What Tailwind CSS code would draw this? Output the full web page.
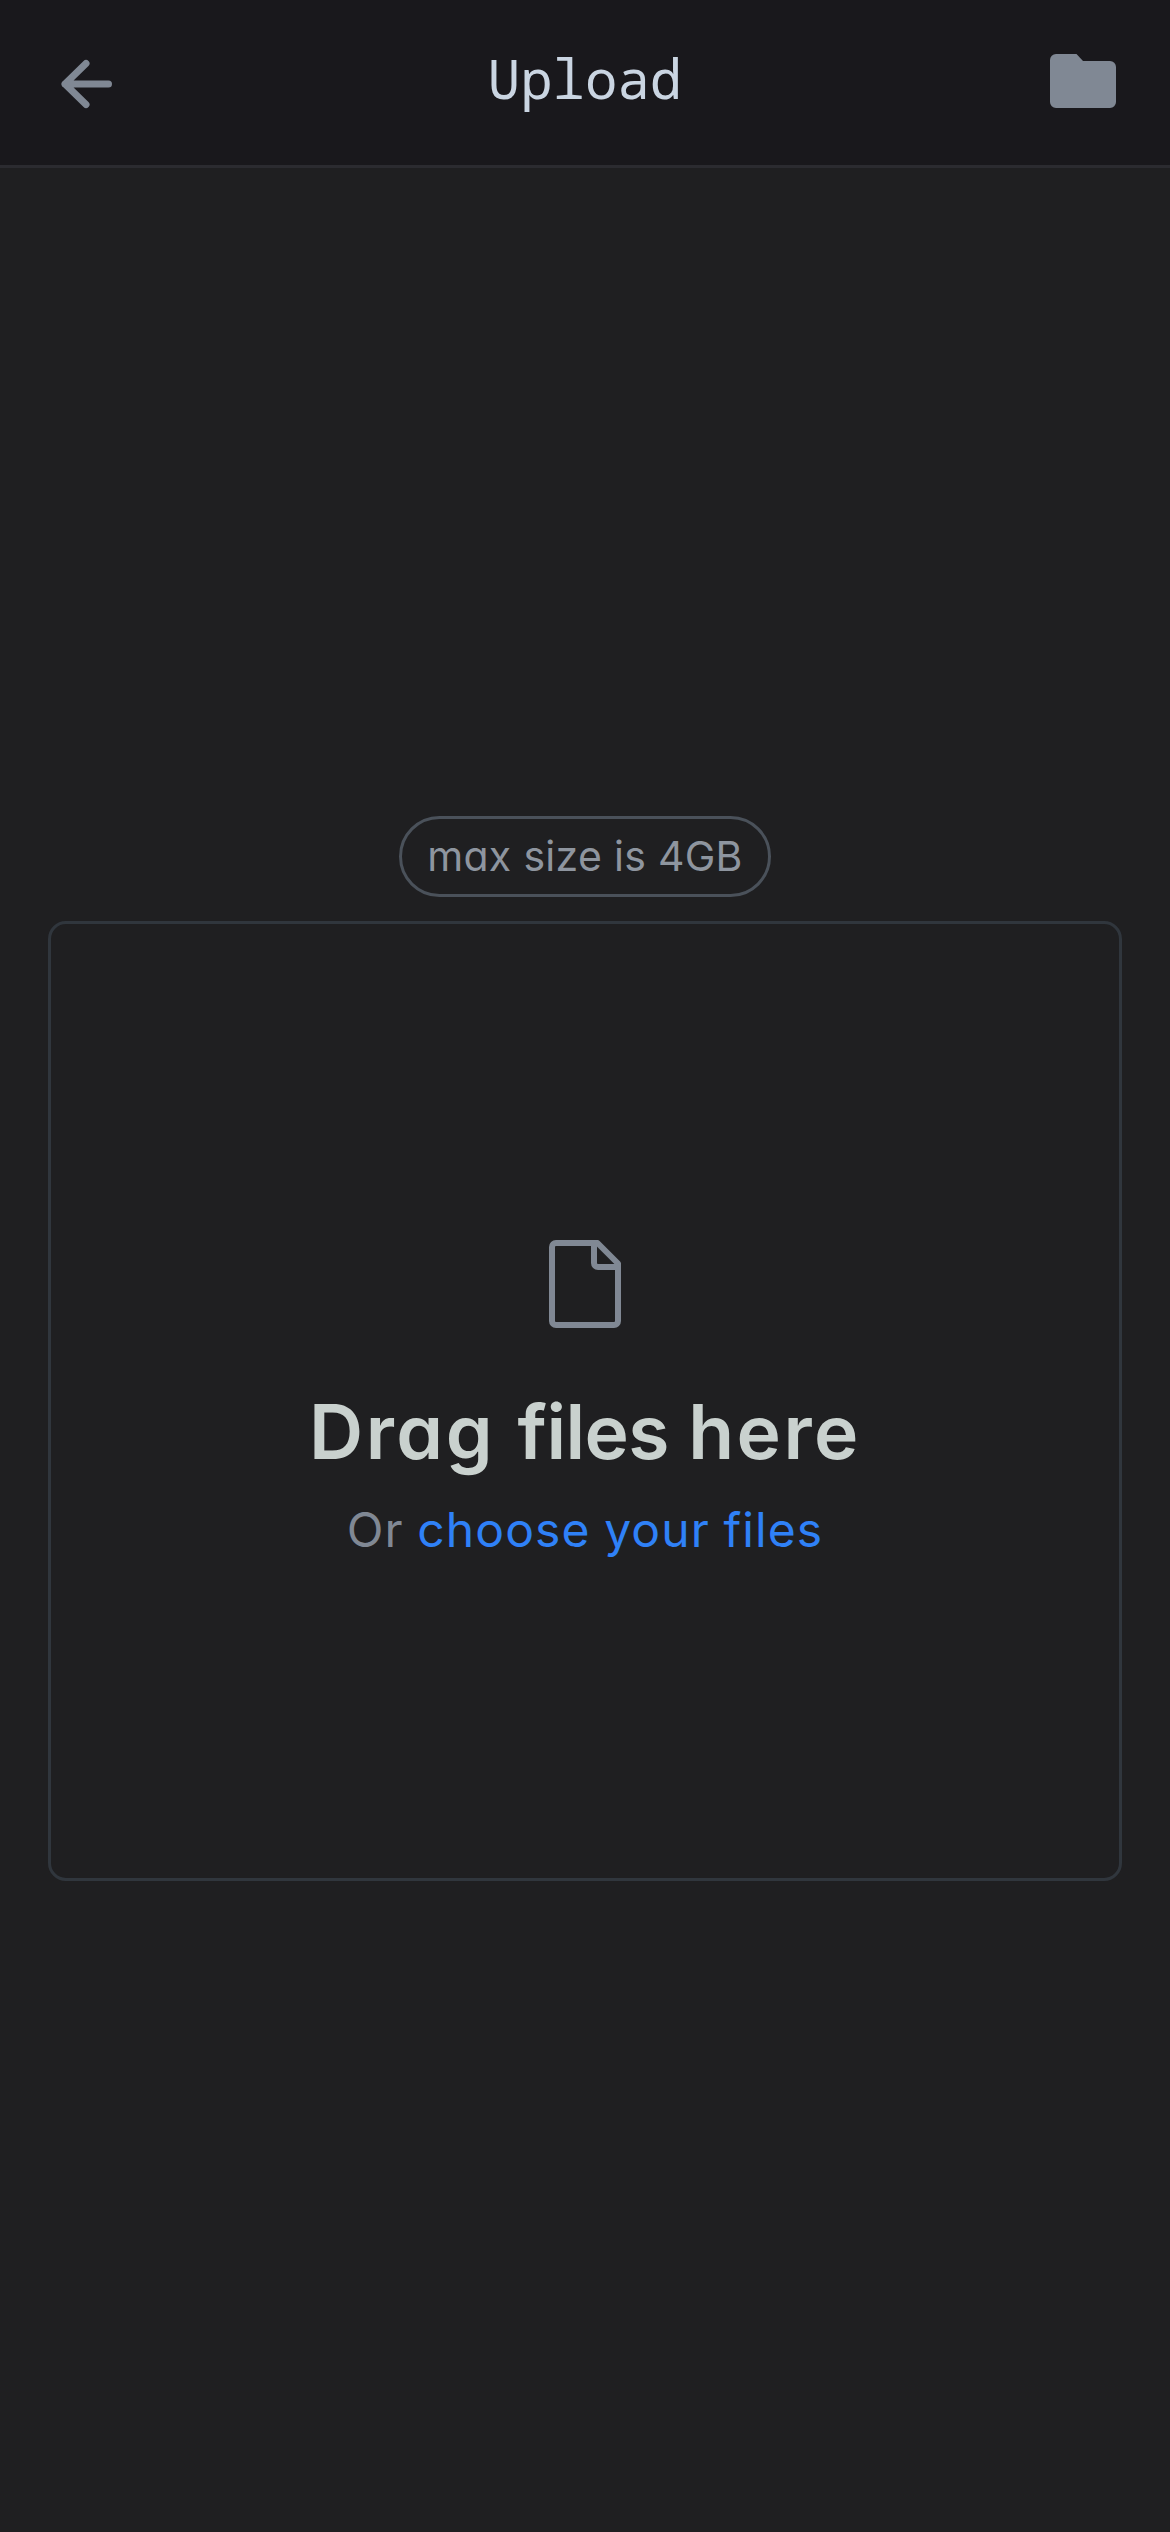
<!DOCTYPE html>
<html lang="en">
<head>
<meta charset="utf-8">
<title>Upload</title>
<script src="https://cdn.jsdelivr.net/npm/@tailwindcss/browser@4"></script>
</head>
<body class="flex h-[2532px] w-[1170px] flex-col bg-[#1f1f21] font-['Inter',sans-serif] [font-feature-settings:'cv11'_1]">
<header class="flex h-[168px] items-start justify-between border-b-3 border-[#2b2b30] bg-[#19181c] px-[54px]">
  <button class="mt-[57px] w-[66px] pl-[6px]" aria-label="Back">
    <svg class="h-[54px] w-[54px]" viewBox="0 0 54 54" fill="none" stroke="#808894" stroke-width="7" stroke-linecap="round" stroke-linejoin="round"><path d="M26 6.500L5 27L26 47.500M5 27H48.500"/></svg>
  </button>
  <h1 class="mt-[42px] font-['Noto_Sans_Mono',monospace] text-[54px] leading-[72px] text-[#cad5e2]">Upload</h1>
  <button class="mt-[54px] w-[66px]" aria-label="Files">
    <svg class="h-[54px] w-[66px]" viewBox="0 0 66 54" fill="#808894"><path d="M6 0H26.500L33 7H60A6 6 0 0 1 66 13V48A6 6 0 0 1 60 54H6A6 6 0 0 1 0 48V6A6 6 0 0 1 6 0Z"/></svg>
  </button>
</header>
<main class="flex flex-1 flex-col items-center pt-[648px]">
  <div class="flex h-[81px] w-[372px] items-center justify-center rounded-full border-3 border-[#4a515a] text-[41px] tracking-[0.3px] whitespace-nowrap text-[#8e959f]"><span>max size is 4GB</span></div>
  <section class="mt-6 flex h-[960px] w-[1074px] flex-col items-center rounded-[18px] border-3 border-[#30363d] pt-[316px]">
    <svg class="h-[88px] w-[72px]" viewBox="0 0 72 88" fill="none" stroke="#808894" stroke-width="6" stroke-linejoin="round"><path d="M7 3H48.500L69 23.500V81A4 4 0 0 1 65 85H7A4 4 0 0 1 3 81V7A4 4 0 0 1 7 3Z"/><path d="M45 3V23A4 4 0 0 0 49 27H69"/></svg>
    <h2 class="mt-[60px] text-[75px] leading-[88px] font-semibold tracking-[2.5px] [word-spacing:1px] whitespace-nowrap text-[#c9d1ce]">Drag <span class="tracking-[-0.6px]">files </span>here</h2>
    <p class="mt-6 text-[48px] leading-[60px] tracking-[1.1px] [word-spacing:-1px] whitespace-nowrap text-[#808894]">Or <a class="text-[#2f81f7]">choose your files</a></p>
  </section>
</main>
</body>
</html>
